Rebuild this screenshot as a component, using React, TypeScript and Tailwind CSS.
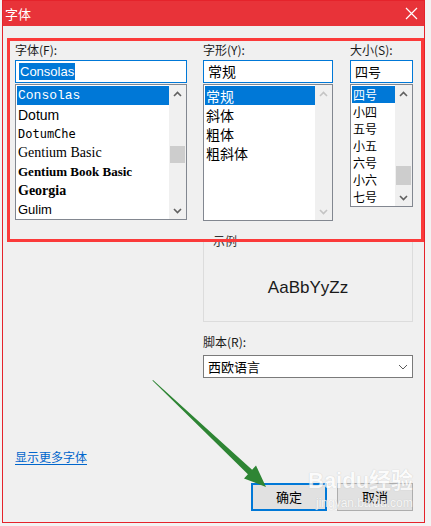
import React from 'react';

const ui = { fontFamily: '"Noto Sans CJK SC", "Liberation Sans", sans-serif' };

type Item = { label: string; style?: React.CSSProperties; className?: string };

const fontItems: Item[] = [
  { label: 'Consolas', className: 'text-[13px]', style: { fontFamily: '"Liberation Mono", monospace' } },
  { label: 'Dotum', className: 'text-[14px]', style: { fontFamily: '"Liberation Sans", sans-serif' } },
  { label: 'DotumChe', className: 'text-[12px]', style: { fontFamily: '"DejaVu Sans Mono", monospace' } },
  { label: 'Gentium Basic', className: 'text-[14px]', style: { fontFamily: '"Liberation Serif", serif' } },
  { label: 'Gentium Book Basic', className: 'text-[13px] font-bold', style: { fontFamily: '"Liberation Serif", serif' } },
  { label: 'Georgia', className: 'text-[14px] font-bold', style: { fontFamily: '"Liberation Serif", serif' } },
  { label: 'Gulim', className: 'text-[13px]', style: { fontFamily: '"Liberation Sans", sans-serif' } },
];

const styleItems: Item[] = ['常规', '斜体', '粗体', '粗斜体'].map((label) => ({ label, className: 'text-[14px]' }));
const sizeItems: Item[] = ['四号', '小四', '五号', '小五', '六号', '小六', '七号'].map((label) => ({ label, className: 'text-[12px]' }));

const Chevron = ({ up, disabled }: { up?: boolean; disabled?: boolean }) => (
  <svg width="9" height="6" viewBox="0 0 9 6">
    <path
      d={up ? 'M1 5 L4.5 1.5 L8 5' : 'M1 1 L4.5 4.5 L8 1'}
      fill="none"
      stroke={disabled ? '#c4c4c4' : '#606060'}
      strokeWidth="1.6"
    />
  </svg>
);

const ScrollBar = ({ thumbTop, thumbHeight, disabled }: { thumbTop?: number; thumbHeight?: number; disabled?: boolean }) => (
  <div className="w-[17px] h-full flex flex-col bg-[#f0f0f0] shrink-0">
    <div className="h-[17px] flex items-center justify-center">
      <Chevron up disabled={disabled} />
    </div>
    <div className="flex-1 relative">
      {thumbTop !== undefined && (
        <div className="absolute left-[1px] right-[1px] bg-[#cdcdcd]" style={{ top: thumbTop, height: thumbHeight }} />
      )}
    </div>
    <div className="h-[17px] flex items-center justify-center">
      <Chevron disabled={disabled} />
    </div>
  </div>
);

const ListBox = ({
  items,
  rowClass,
  height,
  scroll,
}: {
  items: Item[];
  rowClass: string;
  height: string;
  scroll: React.ReactNode;
}) => (
  <div className={`mt-px ${height} border border-[#828790] bg-white flex`}>
    <div className="flex-1 pt-px pl-px overflow-hidden">
      {items.map((it, i) => (
        <div
          key={it.label}
          className={`${rowClass} leading-none flex items-center whitespace-nowrap pl-px ${it.className ?? ''} ${
            i === 0 ? 'bg-[#0078d7] text-white' : 'text-black'
          }`}
          style={{ ...ui, ...it.style }}
        >
          {it.label}
        </div>
      ))}
    </div>
    {scroll}
  </div>
);

const Label = ({ children }: { children: React.ReactNode }) => (
  <div className="h-[16px] leading-[16px] text-[12px] text-[#1a1a1a] mb-[2px]" style={ui}>
    {children}
  </div>
);

export default function App() {
  return (
    <div className="w-[431px] h-[526px] relative bg-[#f3f3f3] overflow-hidden" style={ui}>
      <div className="ml-[2px] w-[423px] h-[523px] border border-[#e5232b] bg-[#f0f0f0] flex flex-col">
        {/* Title bar */}
        <div className="h-[25px] bg-[#e83339] flex items-center justify-between pl-[2px] pr-[6px] shrink-0">
          <span className="text-white text-[13px] leading-none">字体</span>
          <svg width="13" height="13" viewBox="0 0 13 13">
            <path d="M1 1 L12 12 M12 1 L1 12" stroke="#ffffff" strokeWidth="1.2" />
          </svg>
        </div>

        <div className="flex-1 flex flex-col pl-[12px] pr-[11px] pt-[16px] pb-[11px]">
          <div className="flex">
            {/* Font */}
            <div className="w-[172px]">
              <Label>字体(F):</Label>
              <div className="h-[23px] border border-[#0078d7] bg-white flex items-center pl-[3px]">
                <span
                  className="bg-[#0078d7] text-white text-[13px] leading-[17px] px-px"
                  style={{ fontFamily: '"Liberation Sans", sans-serif' }}
                >
                  Consolas
                </span>
              </div>
              <ListBox
                items={fontItems}
                rowClass="h-[19px]"
                height="h-[136px]"
                scroll={<ScrollBar thumbTop={44} thumbHeight={17} />}
              />
            </div>

            <div className="w-[210px] ml-[16px] flex flex-col">
              <div className="flex">
                {/* Style */}
                <div className="w-[130px]">
                  <Label>字形(Y):</Label>
                  <div className="h-[23px] border border-[#0078d7] bg-white flex items-center pl-[4px] text-[14px] text-black">
                    常规
                  </div>
                  <ListBox items={styleItems} rowClass="h-[19px]" height="h-[137px]" scroll={<ScrollBar disabled />} />
                </div>
                {/* Size */}
                <div className="w-[63px] ml-[17px]">
                  <Label>大小(S):</Label>
                  <div className="h-[23px] border border-[#0078d7] bg-white flex items-center pl-[4px] text-[13px] text-black">
                    四号
                  </div>
                  <ListBox
                    items={sizeItems}
                    rowClass="h-[17px]"
                    height="h-[123px]"
                    scroll={<ScrollBar thumbTop={64} thumbHeight={19} />}
                  />
                </div>
              </div>

              {/* Sample */}
              <div className="mt-[20px] h-[81px] border border-[#dcdcdc] relative flex items-center justify-center">
                <span className="absolute -top-[9px] left-[7px] px-[2px] bg-[#f0f0f0] text-[12px] leading-[16px] text-[#333]">
                  示例
                </span>
                <span
                  className="text-[17px] text-[#1a1a1a] mt-[12px]"
                  style={{ fontFamily: '"Liberation Sans", sans-serif' }}
                >
                  AaBbYyZz
                </span>
              </div>

              <div className="mt-[12px]">
                <div className="h-[16px] leading-[16px] text-[12px] text-[#1a1a1a] mb-[5px]">脚本(R):</div>
                <div className="h-[23px] border border-[#7a7a7a] bg-white flex items-center justify-between pl-[4px] pr-[4px] text-[13px] text-black">
                  <span>西欧语言</span>
                  <svg width="10" height="6" viewBox="0 0 10 6">
                    <path d="M1 1 L5 5 L9 1" fill="none" stroke="#5a5a5a" strokeWidth="1" />
                  </svg>
                </div>
              </div>
            </div>
          </div>

          <div className="flex-1" />

          <div className="h-[16px] leading-[16px] text-[12px]">
            <span className="text-[#0066cc] underline underline-offset-2">显示更多字体</span>
          </div>

          <div className="mt-[18px] flex justify-end gap-[10px]">
            <div className="w-[76px] h-[28px] border-2 border-[#0078d7] bg-[#e1e1e1] flex items-center justify-center text-[13px] text-black">
              确定
            </div>
            <div className="w-[76px] h-[28px] border border-[#adadad] bg-[#e1e1e1] flex items-center justify-center text-[13px] text-black">
              取消
            </div>
          </div>
        </div>
      </div>

      {/* Annotation rectangle */}
      <div className="absolute left-[7px] top-[38px] w-[417px] h-[204px] border-[3px] border-[#fb3a3a] pointer-events-none" />

      {/* Watermark */}
      <div className="absolute left-[308px] top-[470px] pointer-events-none opacity-75">
        <div
          className="text-[22px] font-bold leading-none text-white [text-shadow:0_0_1px_#b0b0b0]"
          style={{ fontFamily: '"Liberation Sans", "Noto Sans CJK SC", sans-serif' }}
        >
          Baidu经验
        </div>
        <div
          className="text-[12px] leading-none mt-[5px] ml-[8px] text-white [text-shadow:0_0_1px_#b0b0b0]"
          style={{ fontFamily: '"Liberation Sans", sans-serif' }}
        >
          jingyan.baidu.com
        </div>
      </div>

      {/* Green arrow */}
      <svg className="absolute left-0 top-0 pointer-events-none" width="431" height="526" viewBox="0 0 431 526">
        <polygon
          points="153,380 252.1,469.8 256,465.6 266,487 244,478.4 247.9,474.2 152.4,380.6"
          fill="#2e8534"
        />
      </svg>
    </div>
  );
}
